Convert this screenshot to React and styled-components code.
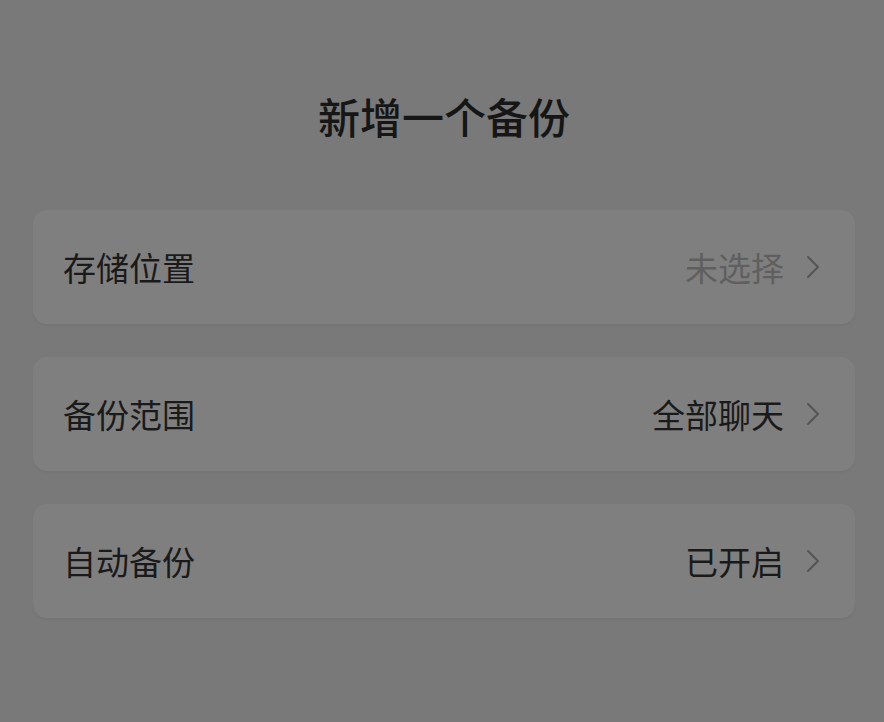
import React from "react";
import styled, { createGlobalStyle } from "styled-components";

const GlobalStyle = createGlobalStyle`
    html, body {
        margin: 0;
        padding: 0;
        background: #797979;
    }
    body {
        font-family: "Noto Sans CJK SC", "Noto Sans", sans-serif;
    }
`

const StyledPage = styled.div`
    box-sizing: border-box;
    width: 884px;
    height: 722px;
    padding: 91px 29px 0 33px;
    background: #797979;
    display: flex;
    flex-direction: column;
`

const StyledTitle = styled.h1`
    margin: 0 0 69px 0;
    height: 50px;
    line-height: 50px;
    font-size: 42px;
    font-weight: 500;
    color: #161616;
    text-align: center;
`

const StyledList = styled.div`
    display: flex;
    flex-direction: column;
    gap: 33px;
`

const StyledRow = styled.div`
    box-sizing: border-box;
    height: 114px;
    padding: 0 35px 0 30px;
    border-radius: 14px;
    background: #7f7f7f;
    box-shadow: 0 2px 3px rgba(0, 0, 0, 0.04);
    display: flex;
    align-items: center;
    justify-content: space-between;
`

const StyledLabel = styled.span`
    font-size: 33px;
    color: #1a1a1a;
`

const StyledValue = styled.div`
    display: flex;
    align-items: center;
    gap: 22px;
    font-size: 33px;
    color: ${({ $muted }) => ($muted ? "#5f5f5f" : "#1a1a1a")};
`

const StyledChevron = styled.svg`
    width: 14px;
    height: 24px;
    display: block;
`

const Chevron = () => (
    <StyledChevron viewBox="0 0 14 24">
        <path d="M2 2 L12 12 L2 22" fill="none" stroke="#555" strokeWidth="2" strokeLinecap="round" strokeLinejoin="round" />
    </StyledChevron>
)

const rows = [
    { label: "存储位置", value: "未选择", muted: true },
    { label: "备份范围", value: "全部聊天" },
    { label: "自动备份", value: "已开启" },
]

const App = () => {
    return (
        <>
            <GlobalStyle />
            <StyledPage>
                <StyledTitle>新增一个备份</StyledTitle>
                <StyledList>
                    {rows.map((row) => (
                        <StyledRow key={row.label}>
                            <StyledLabel>{row.label}</StyledLabel>
                            <StyledValue $muted={row.muted}>
                                {row.value}
                                <Chevron />
                            </StyledValue>
                        </StyledRow>
                    ))}
                </StyledList>
            </StyledPage>
        </>
    )
}

export default App
